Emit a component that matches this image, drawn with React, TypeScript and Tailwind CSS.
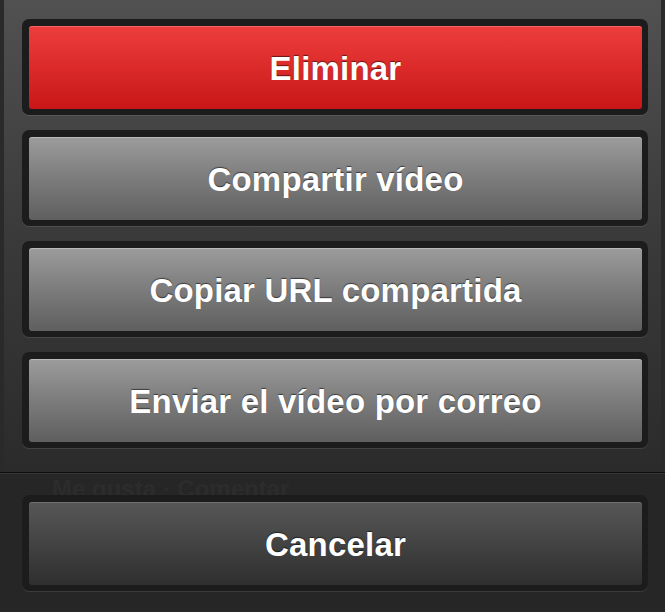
const items = [
  { label: "Eliminar", tone: "red" },
  { label: "Compartir vídeo", tone: "gray" },
  { label: "Copiar URL compartida", tone: "gray" },
  { label: "Enviar el vídeo por correo", tone: "gray" },
];

const toneClass: Record<string, string> = {
  red: "bg-gradient-to-b from-[#ec3d3d] via-[#dc2a2a] to-[#c81616] shadow-[inset_0_1px_0_rgba(255,140,140,0.5)]",
  gray: "bg-gradient-to-b from-[#9c9c9c] via-[#7c7c7c] to-[#5f5f5f] shadow-[inset_0_1px_0_rgba(255,255,255,0.3)]",
  dark: "bg-gradient-to-b from-[#575757] via-[#434343] to-[#2f2f2f] shadow-[inset_0_1px_0_rgba(255,255,255,0.15)]",
};

const SheetButton = ({ label, tone }: { label: string; tone: string }) => (
  <div className="h-[96px] rounded-[7px] bg-[#1c1c1c] pt-[7px] pb-[6px] pl-[7px] pr-[6px] shadow-[0_1px_0_rgba(255,255,255,0.1)]">
    <button
      className={`flex h-full w-full items-center justify-center rounded-[3px] pt-[3px] text-[33px] font-bold tracking-[0.2px] text-white [text-shadow:0_-1px_1px_rgba(0,0,0,0.55)] ${toneClass[tone]}`}
    >
      {label}
    </button>
  </div>
);

export default function App() {
  return (
    <div className="h-[612px] w-[665px] overflow-hidden bg-[#262626] font-['Liberation_Sans',Arial,sans-serif]">
      <div className="relative h-[472px] border-l-[4px] border-r-[4px] border-[#2a2a2a] bg-gradient-to-b from-[#515151] via-[#3a3a3a] to-[#2b2b2b]">
        <div className="flex flex-col gap-[15px] pl-[18px] pr-[13px] pt-[19px]">
          {items.map((it) => (
            <SheetButton key={it.label} label={it.label} tone={it.tone} />
          ))}
        </div>
      </div>
      <div className="h-px bg-[#0e0e0e]" />
      <div className="relative h-[139px] border-t border-[#363636] bg-[#262626] pl-[22px] pr-[17px] pt-[21px]">
        <div className="absolute left-[52px] top-[-3px] text-[24px] font-bold text-[#2c2c2c]">Me gusta · Comentar</div>
        <div className="relative">
          <SheetButton label="Cancelar" tone="dark" />
        </div>
      </div>
    </div>
  );
}
